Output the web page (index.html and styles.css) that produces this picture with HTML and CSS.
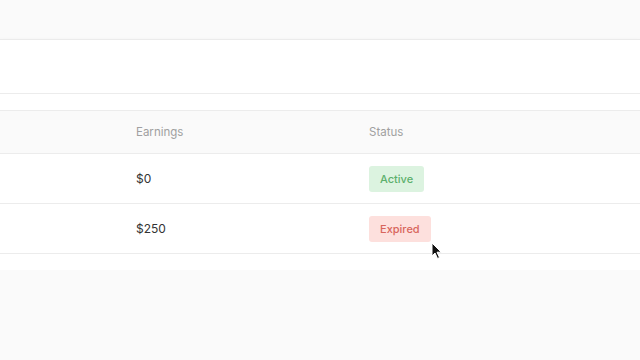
FILE: index.html
```html
<!DOCTYPE html>
<html lang="en">
<head>
    <meta charset="UTF-8">
    <meta name="viewport" content="width=device-width, initial-scale=1.0">
    <title>Affiliates</title>
    <link rel="stylesheet" href="styles.css">
</head>
<body>

    <div class="panel">
        <div class="toolbar"></div>
        <div class="filters"></div>

        <div class="table">
            <div class="row head">
                <div class="cell">Earnings</div>
                <div class="cell">Status</div>
            </div>
            <div class="row">
                <div class="cell">$0</div>
                <div class="cell"><span class="badge active">Active</span></div>
            </div>
            <div class="row">
                <div class="cell">$250</div>
                <div class="cell"><span class="badge expired">Expired</span></div>
            </div>
        </div>
        <div class="footer"></div>
    </div>

    <!-- mouse pointer -->
    <svg class="pointer" width="12" height="18" viewBox="0 0 12 18">
        <path d="M1 1 L1 14 L4 11 L6.5 16.5 L8.5 15.5 L6 10.2 L10.2 10.2 Z" fill="#111" stroke="#fff" stroke-width="1"/>
    </svg>

</body>
</html>
```

FILE: styles.css
```css
body {
    font-family: Inter, "Noto Sans", sans-serif;
    margin: 0;
    padding-top: 39px;
    background-color: #fafafa;
    color: #333;
}
.panel {
    background: #fff;
    border-top: 1px solid #ebebeb;
    box-shadow: 0 2px 5px rgba(0,0,0,0.08);
}
.toolbar {
    height: 53px;
    border-bottom: 1px solid #ececec;
}
.filters {
    height: 16px;
    border-bottom: 1px solid #ececec;
}
.row {
    display: grid;
    grid-template-columns: 233px 1fr;
    align-items: center;
    height: 49px;
    padding-left: 136px;
    border-bottom: 1px solid #ececec;
    font-size: 12px;
}
.row.head {
    height: 42px;
    background: #fafafa;
    color: #a0a0a0;
    font-size: 11.5px;
}
.footer {
    height: 16px;
}
.badge {
    display: inline-block;
    padding: 6px 11px;
    border-radius: 3px;
    font-size: 11px;
    font-weight: 500;
}
.active {
    background: #dcf3e0;
    color: #5cb06c;
}
.expired {
    background: #fde0dd;
    color: #d8665c;
}
.pointer {
    position: absolute;
    left: 431px;
    top: 242px;
}
```
